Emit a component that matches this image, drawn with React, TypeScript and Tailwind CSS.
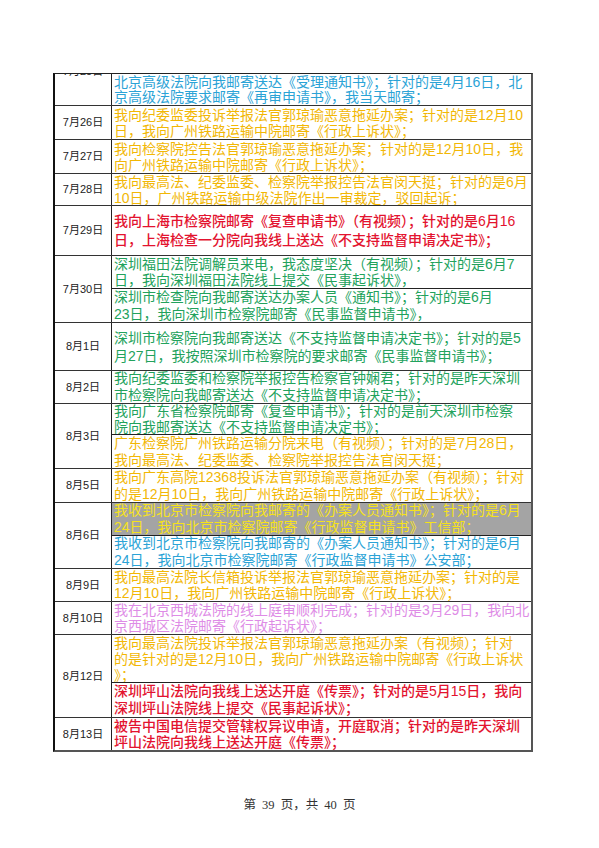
type Cell = {
  h: string;
  tone: string;
  lead: string;
  lines: string[];
};

type Row = {
  date: string;
  clipped?: boolean;
  cells: Cell[];
};

const BLUE = "text-[#2ba3d6]";
const YELLOW = "text-[#f2b705]";
const RED = "text-[#e3132f] font-medium";
const GREEN = "text-[#22a25c]";
const GRAY = "text-[#f6e21c] bg-[#a4a4a4]";
const PURPLE = "text-[#de8ce6]";

const rows: Row[] = [
  {
    date: "7月25日",
    clipped: true,
    cells: [
      {
        h: "h-[31px]",
        tone: BLUE,
        lead: "leading-[15px]",
        lines: [
          "北京高级法院向我邮寄送达《受理通知书》；针对的是4月16日，北",
          "京高级法院要求邮寄《再审申请书》，我当天邮寄；",
        ],
      },
    ],
  },
  {
    date: "7月26日",
    cells: [
      {
        h: "h-[33px]",
        tone: YELLOW,
        lead: "leading-[16px]",
        lines: [
          "我向纪委监委投诉举报法官郭琼瑜恶意拖延办案；针对的是12月10",
          "日，我向广州铁路运输中院邮寄《行政上诉状》；",
        ],
      },
    ],
  },
  {
    date: "7月27日",
    cells: [
      {
        h: "h-[33px]",
        tone: YELLOW,
        lead: "leading-[16px]",
        lines: [
          "我向检察院控告法官郭琼瑜恶意拖延办案；针对的是12月10日，我",
          "向广州铁路运输中院邮寄《行政上诉状》；",
        ],
      },
    ],
  },
  {
    date: "7月28日",
    cells: [
      {
        h: "h-[31px]",
        tone: YELLOW,
        lead: "leading-[16px]",
        lines: [
          "我向最高法、纪委监委、检察院举报控告法官闵天挺；针对的是6月",
          "10日，广州铁路运输中级法院作出一审裁定，驳回起诉；",
        ],
      },
    ],
  },
  {
    date: "7月29日",
    cells: [
      {
        h: "h-[49px]",
        tone: RED,
        lead: "leading-[19px]",
        lines: [
          "我向上海市检察院邮寄《复查申请书》（有视频）；针对的是6月16",
          "日，上海检查一分院向我线上送达《不支持监督申请决定书》；",
        ],
      },
    ],
  },
  {
    date: "7月30日",
    cells: [
      {
        h: "h-[33px]",
        tone: GREEN,
        lead: "leading-[16px]",
        lines: [
          "深圳福田法院调解员来电，我态度坚决（有视频）；针对的是6月7",
          "日，我向深圳福田法院线上提交《民事起诉状》，",
        ],
      },
      {
        h: "h-[33px]",
        tone: GREEN,
        lead: "leading-[17px]",
        lines: [
          "深圳市检查院向我邮寄送达办案人员《通知书》；针对的是6月",
          "23日，我向深圳市检察院邮寄《民事监督申请书》，",
        ],
      },
    ],
  },
  {
    date: "8月1日",
    cells: [
      {
        h: "h-[47px]",
        tone: GREEN,
        lead: "leading-[18px]",
        lines: [
          "深圳市检察院向我邮寄送达《不支持监督申请决定书》；针对的是5",
          "月27日，我按照深圳市检察院的要求邮寄《民事监督申请书》；",
        ],
      },
    ],
  },
  {
    date: "8月2日",
    cells: [
      {
        h: "h-[32px]",
        tone: GREEN,
        lead: "leading-[17px]",
        lines: [
          "我向纪委监委和检察院举报控告检察官钟娴君；针对的是昨天深圳",
          "市检察院向我邮寄送达《不支持监督申请决定书》；",
        ],
      },
    ],
  },
  {
    date: "8月3日",
    cells: [
      {
        h: "h-[31px]",
        tone: GREEN,
        lead: "leading-[16px]",
        lines: [
          "我向广东省检察院邮寄《复查申请书》；针对的是前天深圳市检察",
          "院向我邮寄送达《不支持监督申请决定书》；",
        ],
      },
      {
        h: "h-[33px]",
        tone: YELLOW,
        lead: "leading-[17px]",
        lines: [
          "广东检察院广州铁路运输分院来电（有视频）；针对的是7月28日，",
          "我向最高法、纪委监委、检察院举报控告法官闵天挺；",
        ],
      },
    ],
  },
  {
    date: "8月5日",
    cells: [
      {
        h: "h-[33px]",
        tone: YELLOW,
        lead: "leading-[17px]",
        lines: [
          "我向广东高院12368投诉法官郭琼瑜恶意拖延办案（有视频）；针对",
          "的是12月10日，我向广州铁路运输中院邮寄《行政上诉状》；",
        ],
      },
    ],
  },
  {
    date: "8月6日",
    cells: [
      {
        h: "h-[33px]",
        tone: GRAY,
        lead: "leading-[17px]",
        lines: [
          "我收到北京市检察院向我邮寄的《办案人员通知书》；针对的是6月",
          "24日，我向北京市检察院邮寄《行政监督申请书》工信部；",
        ],
      },
      {
        h: "h-[32px]",
        tone: BLUE,
        lead: "leading-[17px]",
        lines: [
          "我收到北京市检察院向我邮寄的《办案人员通知书》；针对的是6月",
          "24日，我向北京市检察院邮寄《行政监督申请书》公安部；",
        ],
      },
    ],
  },
  {
    date: "8月9日",
    cells: [
      {
        h: "h-[32px]",
        tone: YELLOW,
        lead: "leading-[16px]",
        lines: [
          "我向最高法院长信箱投诉举报法官郭琼瑜恶意拖延办案；针对的是",
          "12月10日，我向广州铁路运输中院邮寄《行政上诉状》；",
        ],
      },
    ],
  },
  {
    date: "8月10日",
    cells: [
      {
        h: "h-[32px]",
        tone: PURPLE,
        lead: "leading-[16px]",
        lines: [
          "我在北京西城法院的线上庭审顺利完成；针对的是3月29日，我向北",
          "京西城区法院邮寄《行政起诉状》；",
        ],
      },
    ],
  },
  {
    date: "8月12日",
    cells: [
      {
        h: "h-[48px]",
        tone: YELLOW,
        lead: "leading-[16px]",
        lines: [
          "我向最高法院投诉举报法官郭琼瑜恶意拖延办案（有视频）；针对",
          "的是针对的是12月10日，我向广州铁路运输中院邮寄《行政上诉状",
          "》；",
        ],
      },
      {
        h: "h-[34px]",
        tone: RED,
        lead: "leading-[17px]",
        lines: [
          "深圳坪山法院向我线上送达开庭《传票》；针对的是5月15日，我向",
          "深圳坪山法院线上提交《民事起诉状》；",
        ],
      },
    ],
  },
  {
    date: "8月13日",
    cells: [
      {
        h: "h-[32px]",
        tone: RED,
        lead: "leading-[16px]",
        lines: [
          "被告中国电信提交管辖权异议申请，开庭取消；针对的是昨天深圳",
          "坪山法院向我线上送达开庭《传票》；",
        ],
      },
    ],
  },
];

const DateCell = ({ date, clipped }: { date: string; clipped?: boolean }) => {
  if (clipped) {
    return (
      <div className="w-[57px] shrink-0 border-r border-[#222] overflow-hidden flex justify-center items-start">
        <span className="-mt-[9px] text-[11px] leading-[13px] text-[#222]">
          {date}
        </span>
      </div>
    );
  }
  return (
    <div className="w-[57px] shrink-0 border-r border-[#222] flex items-center justify-center">
      <span className="text-[11px] leading-[13px] text-[#222]">{date}</span>
    </div>
  );
};

const TextCell = ({ cell, last }: { cell: Cell; last: boolean }) => {
  return (
    <div
      className={`${cell.h} ${cell.tone} ${cell.lead} ${
        last ? "" : "border-b border-[#222]"
      } pl-[2px] flex flex-col justify-center overflow-hidden text-[14px]`}
    >
      {cell.lines.map((line, i) => (
        <div key={i} className="whitespace-nowrap">
          {line}
        </div>
      ))}
    </div>
  );
};

export default function App() {
  return (
    <div
      className="w-[599px] h-[848px] bg-white relative overflow-hidden"
      style={{ fontFamily: '"Liberation Sans", "Noto Sans CJK SC", sans-serif' }}
    >
      <div className="pt-[73px] pl-[53px]">
        <div className="w-[480px] border-t border-l-2 border-r-2 border-b-2 border-t-[#222] border-l-[#111] border-r-[#555] border-b-[#555]">
          {rows.map((row, i) => (
            <div
              key={row.date}
              className={`flex ${
                i === rows.length - 1 ? "" : "border-b border-[#333]"
              }`}
            >
              <DateCell date={row.date} clipped={row.clipped} />
              <div className="flex-1 flex flex-col min-w-0">
                {row.cells.map((cell, j) => (
                  <TextCell
                    key={j}
                    cell={cell}
                    last={j === row.cells.length - 1}
                  />
                ))}
              </div>
            </div>
          ))}
        </div>
      </div>
      <div
        className="mt-[44px] text-center text-[12.5px] text-[#333] [word-spacing:3px]"
        style={{ fontFamily: '"Liberation Serif", "Noto Sans CJK SC", serif' }}
      >
        第 39 页，共 40 页
      </div>
    </div>
  );
}
